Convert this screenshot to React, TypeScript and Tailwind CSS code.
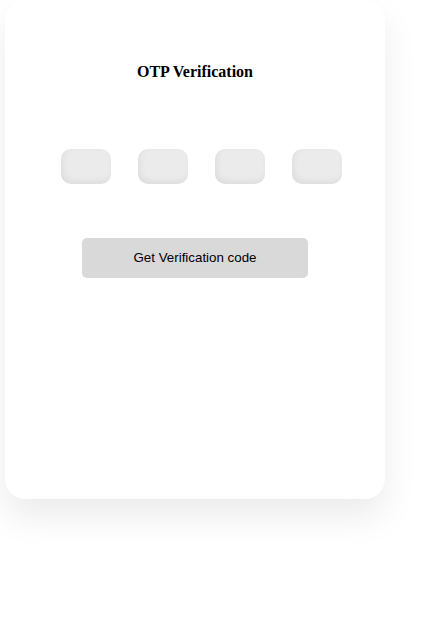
export default function App() {
  const boxes = [0, 1, 2, 3];

  return (
    <div className="h-[625px] w-full bg-white">
      <div className="ml-[5px] flex h-[499px] w-[380px] flex-col rounded-[20px] bg-white pt-[60px] shadow-[0_18px_34px_rgba(0,0,0,0.08)]">
        <h1 className="text-center font-['Liberation_Serif',serif] text-base leading-6 font-bold text-black">
          OTP Verification
        </h1>

        <div className="mt-[65px] flex gap-[27px] pl-[56px]">
          {boxes.map((i) => (
            <input
              key={i}
              type="text"
              maxLength={1}
              className="h-[35px] w-[50px] rounded-[10px] bg-[#ebebeb] text-center shadow-[inset_2px_-3px_6px_rgba(0,0,0,0.06)] outline-none"
            />
          ))}
        </div>

        <button className="mx-auto mt-[54px] h-[40px] w-[226px] rounded-[5px] bg-[#d9d9d9] font-['Liberation_Sans',Arial,sans-serif] text-[13.33px] text-black">
          Get Verification code
        </button>
      </div>
    </div>
  );
}
